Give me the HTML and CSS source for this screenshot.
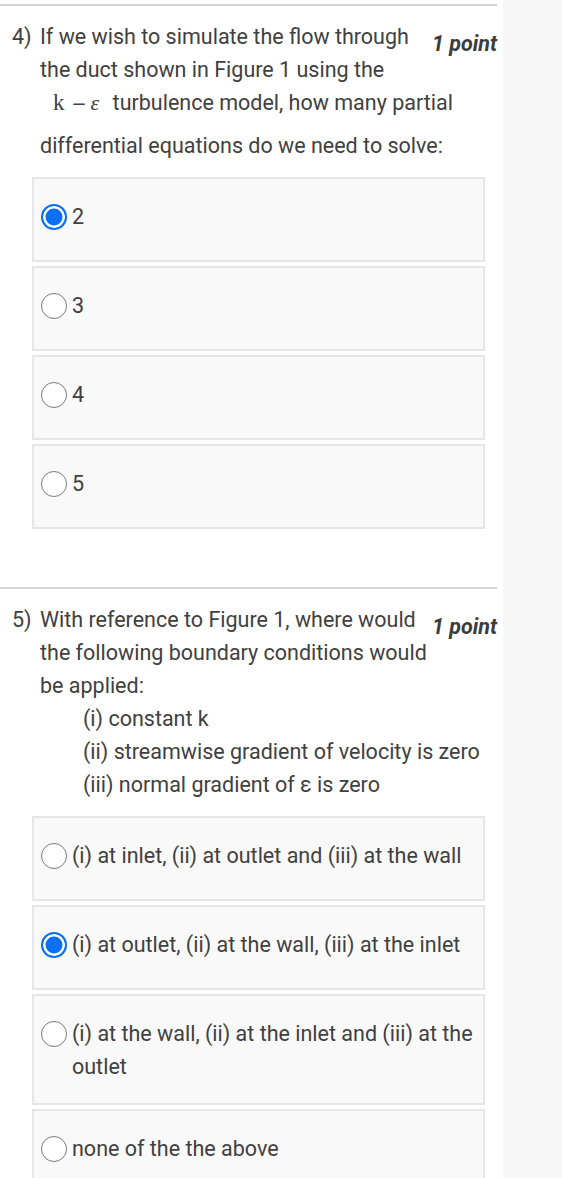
FILE: index.html
```html
<!DOCTYPE html>
<html lang="en">
<head>
<meta charset="utf-8">
<title>Quiz</title>
<link rel="stylesheet" href="styles.css">
</head>
<body>
<div class="page">
  <main class="main">
    <section class="question">
      <div class="q-head">
        <span class="q-num">4)</span>
        <div class="q-text">
          <span class="points">1 point</span>
          If we wish to simulate the flow through the duct shown in Figure 1 using the <span class="math"><span class="m-k">k</span><span class="m-op">−</span><span class="m-eps">ε</span></span> turbulence model, how many partial differential equations do we need to solve:
        </div>
      </div>
      <div class="options">
        <label class="option"><span class="radio checked"></span><span class="opt-text">2</span></label>
        <label class="option"><span class="radio"></span><span class="opt-text">3</span></label>
        <label class="option"><span class="radio"></span><span class="opt-text">4</span></label>
        <label class="option"><span class="radio"></span><span class="opt-text">5</span></label>
      </div>
    </section>
    <section class="question">
      <div class="q-head">
        <span class="q-num">5)</span>
        <div class="q-text">
          <span class="points">1 point</span>
          With reference to Figure 1, where would the following boundary conditions would be applied:
          <ul class="conds">
            <li>(i) constant k</li>
            <li>(ii) streamwise gradient of velocity is zero</li>
            <li>(iii) normal gradient of ε is zero</li>
          </ul>
        </div>
      </div>
      <div class="options">
        <label class="option"><span class="radio"></span><span class="opt-text">(i) at inlet, (ii) at outlet and (iii) at the wall</span></label>
        <label class="option"><span class="radio checked"></span><span class="opt-text">(i) at outlet, (ii) at the wall, (iii) at the inlet</span></label>
        <label class="option"><span class="radio"></span><span class="opt-text">(i) at the wall, (ii) at the inlet and (iii) at the outlet</span></label>
        <label class="option"><span class="radio"></span><span class="opt-text">none of the the above</span></label>
      </div>
    </section>
  </main>
  <aside class="side"></aside>
</div>
</body>
</html>
```

FILE: styles.css
```css
* { box-sizing: border-box; }

html, body {
  margin: 0;
  padding: 0;
  background: #ffffff;
}

body {
  font-family: Roboto, "Noto Sans", "Liberation Sans", sans-serif;
  font-size: 21.5px;
  line-height: 33px;
  color: #404040;
}

.page {
  display: flex;
  gap: 6px;
  min-height: 1178px;
}

.main {
  width: 497px;
  flex: none;
  padding-top: 4px;
}

.side {
  flex: 1;
  background: #f7f7f7;
}

.question {
  border-top: 2px solid #d4d4d4;
  padding-top: 14px;
  padding-bottom: 58px;
}

.q-head {
  display: flex;
}

.q-num {
  width: 40px;
  flex: none;
  padding-left: 12px;
}

.q-text {
  flex: 1;
}

.points {
  float: right;
  font-weight: 700;
  font-style: italic;
  margin-top: 7px;
  padding-bottom: 20px;
  color: #3c3c3c;
}

.math {
  display: inline-block;
  padding-bottom: 9px;
  margin-left: 13px;
  margin-right: 8px;
  line-height: 33px;
}

.m-k { display: inline-block; font-family: "Liberation Serif", serif; font-size: 23px; }
.m-op { display: inline-block; margin: 0 4px 0 7px; font-family: "DejaVu Sans", sans-serif; font-size: 18px; }
.m-eps { display: inline-block; font-style: italic; font-family: "Liberation Serif", serif; font-size: 22px; }

.conds {
  list-style: none;
  margin: 0;
  padding: 0 0 0 43px;
}

.options {
  margin-top: 15px;
  padding-left: 32px;
  width: 485px;
  display: flex;
  flex-direction: column;
  gap: 4px;
}

.option {
  display: flex;
  align-items: flex-start;
  min-height: 85px;
  padding: 21px 8px 20px 7px;
  background: #f9f9f9;
  border: 2px solid #e6e6e6;
}

.radio {
  flex: none;
  width: 26px;
  height: 26px;
  margin-top: 3.5px;
  margin-right: 5px;
  border-radius: 50%;
  border: 1.5px solid #7a7a7a;
  background: #ffffff;
}

.radio.checked {
  border: 2px solid #0b6ff2;
  background: #0b6ff2;
  box-shadow: inset 0 0 0 2.5px #ffffff;
}

.opt-text {
  flex: 1;
}
```
